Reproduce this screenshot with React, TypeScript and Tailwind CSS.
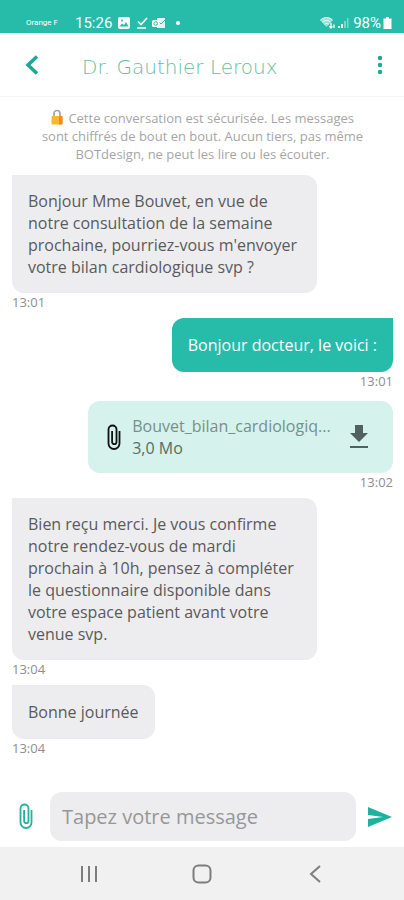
import { useState } from "react";

type Message = {
  id: number;
  from: "doctor" | "patient";
  time: string;
  text?: string;
  file?: { name: string; size: string };
};

const MESSAGES: Message[] = [
  {
    id: 1,
    from: "doctor",
    time: "13:01",
    text: "Bonjour Mme Bouvet, en vue de notre consultation de la semaine prochaine, pourriez-vous m'envoyer votre bilan cardiologique svp ?",
  },
  { id: 2, from: "patient", time: "13:01", text: "Bonjour docteur, le voici :" },
  {
    id: 3,
    from: "patient",
    time: "13:02",
    file: { name: "Bouvet_bilan_cardiologiq...", size: "3,0 Mo" },
  },
  {
    id: 4,
    from: "doctor",
    time: "13:04",
    text: "Bien reçu merci. Je vous confirme notre rendez-vous de mardi prochain à 10h, pensez à compléter le questionnaire disponible dans votre espace patient avant votre venue svp.",
  },
  { id: 5, from: "doctor", time: "13:04", text: "Bonne journée" },
];

export default function App() {
  return (
    <div className="flex h-screen min-w-80 flex-col bg-white font-['Open_Sans',sans-serif]">
      <StatusBar />
      <ChatHeader name="Dr. Gauthier Leroux" />
      <main className="min-h-0 flex-1 overflow-hidden pt-3 pr-[11px] pl-3">
        <p className="mx-auto max-w-[328px] text-center text-[13px] leading-[18px] text-[#a6a6a6]">
          <LockIcon /> Cette conversation est sécurisée. Les messages sont chiffrés de bout en
          bout. Aucun tiers, pas même BOTdesign, ne peut les lire ou les écouter.
        </p>
        <ol className="mt-3 flex flex-col gap-2">
          {MESSAGES.map((message) => (
            <MessageRow key={message.id} message={message} />
          ))}
        </ol>
      </main>
      <Composer />
      <SystemNav />
    </div>
  );
}

function StatusBar() {
  return (
    <div className="flex h-[33px] shrink-0 items-end justify-between bg-[#27bbaa] pr-3 pl-[26px] font-['Roboto',sans-serif] text-white">
      <div className="flex h-5 items-center">
        <span className="w-[49px] text-[8px]">Orange F</span>
        <span className="text-[15px]">15:26</span>
        <svg className="ml-1.5 h-3 w-3" viewBox="0 0 12 12">
          <rect width="12" height="12" rx="2" fill="currentColor" />
          <path d="M1.5 9.5 4 6.5l2 1.5 2-3 2.5 4.5z" fill="#27bbaa" />
          <circle cx="4" cy="3.5" r="1" fill="#27bbaa" />
        </svg>
        <svg className="ml-1.5 h-3 w-3" viewBox="0 0 12 12" fill="none" stroke="currentColor" strokeWidth="1.7">
          <path d="M2 4.5 5 7.5 11 1M1 11h9" />
        </svg>
        <svg className="ml-1 h-3 w-3.5" viewBox="0 0 14 12">
          <path d="M5 1h8v10H5z" fill="currentColor" opacity="0.85" />
          <path d="m5 3 4 4 4-4" fill="none" stroke="#27bbaa" />
          <rect y="3" width="7.5" height="7" rx="1.5" fill="currentColor" />
          <circle cx="3.7" cy="6.5" r="1.8" fill="none" stroke="#27bbaa" />
        </svg>
        <span className="ml-2.5 h-1 w-1 rounded-full bg-white" />
      </div>
      <div className="flex h-5 items-center">
        <svg className="h-3.5 w-4" viewBox="0 0 16 14">
          <path d="M0 4C4 .5 9.500 .5 13 4L6.500 11z" fill="currentColor" opacity="0.55" />
          <path
            d="M.5 4C4.500 .8 9 .8 12.500 4M2.500 6c2.500-2 5.500-2 8 0M4.500 8.200c1.300-1 2.700-1 4 0"
            fill="none"
            stroke="currentColor"
          />
          <path d="M11 7v5m-1.700-1.700L11 12l1.500-1.500M14 12V8.500" fill="none" stroke="currentColor" strokeWidth="1.300" />
        </svg>
        <svg className="ml-px h-3 w-3" viewBox="0 0 12 12" fill="currentColor">
          <path d="M1 9h2v2H1zM4 7h2v4H4z" />
          <path d="M7 4h2v7H7zM10 1h1.500v10H10z" opacity="0.4" />
        </svg>
        <span className="ml-1 text-[15px]">98%</span>
        <svg className="ml-0.5 h-3.5 w-[9px]" viewBox="0 0 9 14" fill="currentColor">
          <path d="M3 1h3v1.500h2.500V13h-8V2.500H3z" />
        </svg>
      </div>
    </div>
  );
}

function ChatHeader({ name }: { name: string }) {
  return (
    <header className="flex h-16 shrink-0 items-center border-b border-[#f3f3f3] px-4 text-[#1da795]">
      <button type="button" aria-label="Retour" className="flex h-8 w-8 items-center justify-center">
        <svg className="h-5 w-4" viewBox="0 0 16 20" fill="none" stroke="currentColor" strokeWidth="3.500">
          <path d="m13 1.500-9 8.500 9 8.500" />
        </svg>
      </button>
      <h1 className="ml-[34px] flex-1 pt-1 font-['DejaVu_Sans',sans-serif] text-xl font-extralight text-[#5fbfa2]">
        {name}
      </h1>
      <button type="button" aria-label="Options" className="flex h-8 w-4 items-center justify-center">
        <svg className="h-5 w-1.5" viewBox="0 0 6 20" fill="currentColor">
          <circle cx="3" cy="3" r="2.200" />
          <circle cx="3" cy="10" r="2.200" />
          <circle cx="3" cy="17" r="2.200" />
        </svg>
      </button>
    </header>
  );
}

function MessageRow({ message }: { message: Message }) {
  const mine = message.from === "patient";
  return (
    <li className={mine ? "flex flex-col items-end" : "flex flex-col items-start"}>
      {message.file ? (
        <FileBubble name={message.file.name} size={message.file.size} />
      ) : (
        <p
          className={
            mine
              ? "flex min-h-[54px] max-w-4/5 items-center rounded-xl rounded-tr-none bg-[#27bbaa] px-4 py-[15px] text-base leading-[22px] text-white"
              : "flex min-h-[54px] max-w-4/5 items-center rounded-xl rounded-tl-none bg-[#ededef] px-4 py-[15px] text-base leading-[22px] text-[#5a5a5c]"
          }
        >
          {message.text}
        </p>
      )}
      <time className="mt-px text-[13px] leading-4 text-[#8e8e8e]">{message.time}</time>
    </li>
  );
}

function FileBubble({ name, size }: { name: string; size: string }) {
  return (
    <div className="mt-1 flex h-[72px] w-4/5 items-center rounded-xl bg-[#d5f2ec] pr-6 pl-[18px]">
      <PaperclipIcon className="h-[27px] w-4 shrink-0 text-[#111]" />
      <div className="ml-2.5 min-w-0 flex-1 text-base leading-[22px]">
        <p className="text-[#76908b]">{name}</p>
        <p className="text-[#5b6b68]">{size}</p>
      </div>
      <button type="button" aria-label="Télécharger" className="ml-3 shrink-0 text-[#52615e]">
        <svg className="h-6 w-5" viewBox="0 0 20 24" fill="currentColor">
          <path d="M6 0h8v8h5l-9 9-9-9h5zM1 21h18v2H1z" />
        </svg>
      </button>
    </div>
  );
}

function Composer() {
  const [draft, setDraft] = useState("");
  return (
    <form
      className="flex shrink-0 items-center px-3 pb-1.5"
      onSubmit={(e) => {
        e.preventDefault();
        setDraft("");
      }}
    >
      <button type="button" aria-label="Joindre un fichier" className="flex w-7 justify-center text-[#27b09e]">
        <PaperclipIcon className="h-[27px] w-4" />
      </button>
      <input
        type="text"
        aria-label="Message"
        placeholder="Tapez votre message"
        value={draft}
        onChange={(e) => setDraft(e.target.value)}
        className="ml-2.5 h-[49px] min-w-0 flex-1 rounded-xl bg-[#ededef] px-3 text-xl text-[#5a5a5c] outline-none placeholder:text-[#979797]"
      />
      <button type="submit" aria-label="Envoyer" className="ml-3 text-[#1fb19f]">
        <svg className="h-5 w-6" viewBox="0 0 24 20" fill="currentColor">
          <path d="M0 0 24 10 0 20v-8l15-2L0 8z" />
        </svg>
      </button>
    </form>
  );
}

function SystemNav() {
  return (
    <nav className="flex h-[53px] shrink-0 items-center justify-around bg-[#f1f1f1] px-8 text-[#7d7d7d]">
      <button type="button" aria-label="Applications récentes">
        <svg className="h-5 w-5" viewBox="0 0 20 20" fill="none" stroke="currentColor" strokeWidth="2">
          <path d="M3 2v16M10 2v16M17 2v16" />
        </svg>
      </button>
      <button type="button" aria-label="Accueil">
        <svg className="h-5 w-5" viewBox="0 0 20 20" fill="none" stroke="currentColor" strokeWidth="2">
          <rect x="1.500" y="1.500" width="17" height="17" rx="5" />
        </svg>
      </button>
      <button type="button" aria-label="Précédent">
        <svg className="h-5 w-5" viewBox="0 0 20 20" fill="none" stroke="currentColor" strokeWidth="2">
          <path d="m15 2-9 8 9 8" />
        </svg>
      </button>
    </nav>
  );
}

function PaperclipIcon({ className }: { className: string }) {
  return (
    <svg className={className} viewBox="0 0 16 27" fill="none" stroke="currentColor" strokeWidth="1.800">
      <path d="M13.500 7v12.500a5.500 5.500 0 0 1-11 0V5.500a4 4 0 0 1 8 0V18a2.200 2.200 0 0 1-4.400 0V7" />
    </svg>
  );
}

function LockIcon() {
  return (
    <svg className="mr-0.5 inline h-4 w-3 align-[-2px]" viewBox="0 0 12 16" aria-hidden="true">
      <path d="M3 8V4.500a3 3 0 0 1 6 0V8" fill="none" stroke="#a3a5a8" strokeWidth="1.700" />
      <rect x="0.500" y="7" width="11" height="8.500" rx="1" fill="#fbb829" />
      <path d="M8 7h2.500a1 1 0 0 1 1 1v6.500a1 1 0 0 1-1 1H8z" fill="#f08c1a" />
    </svg>
  );
}
